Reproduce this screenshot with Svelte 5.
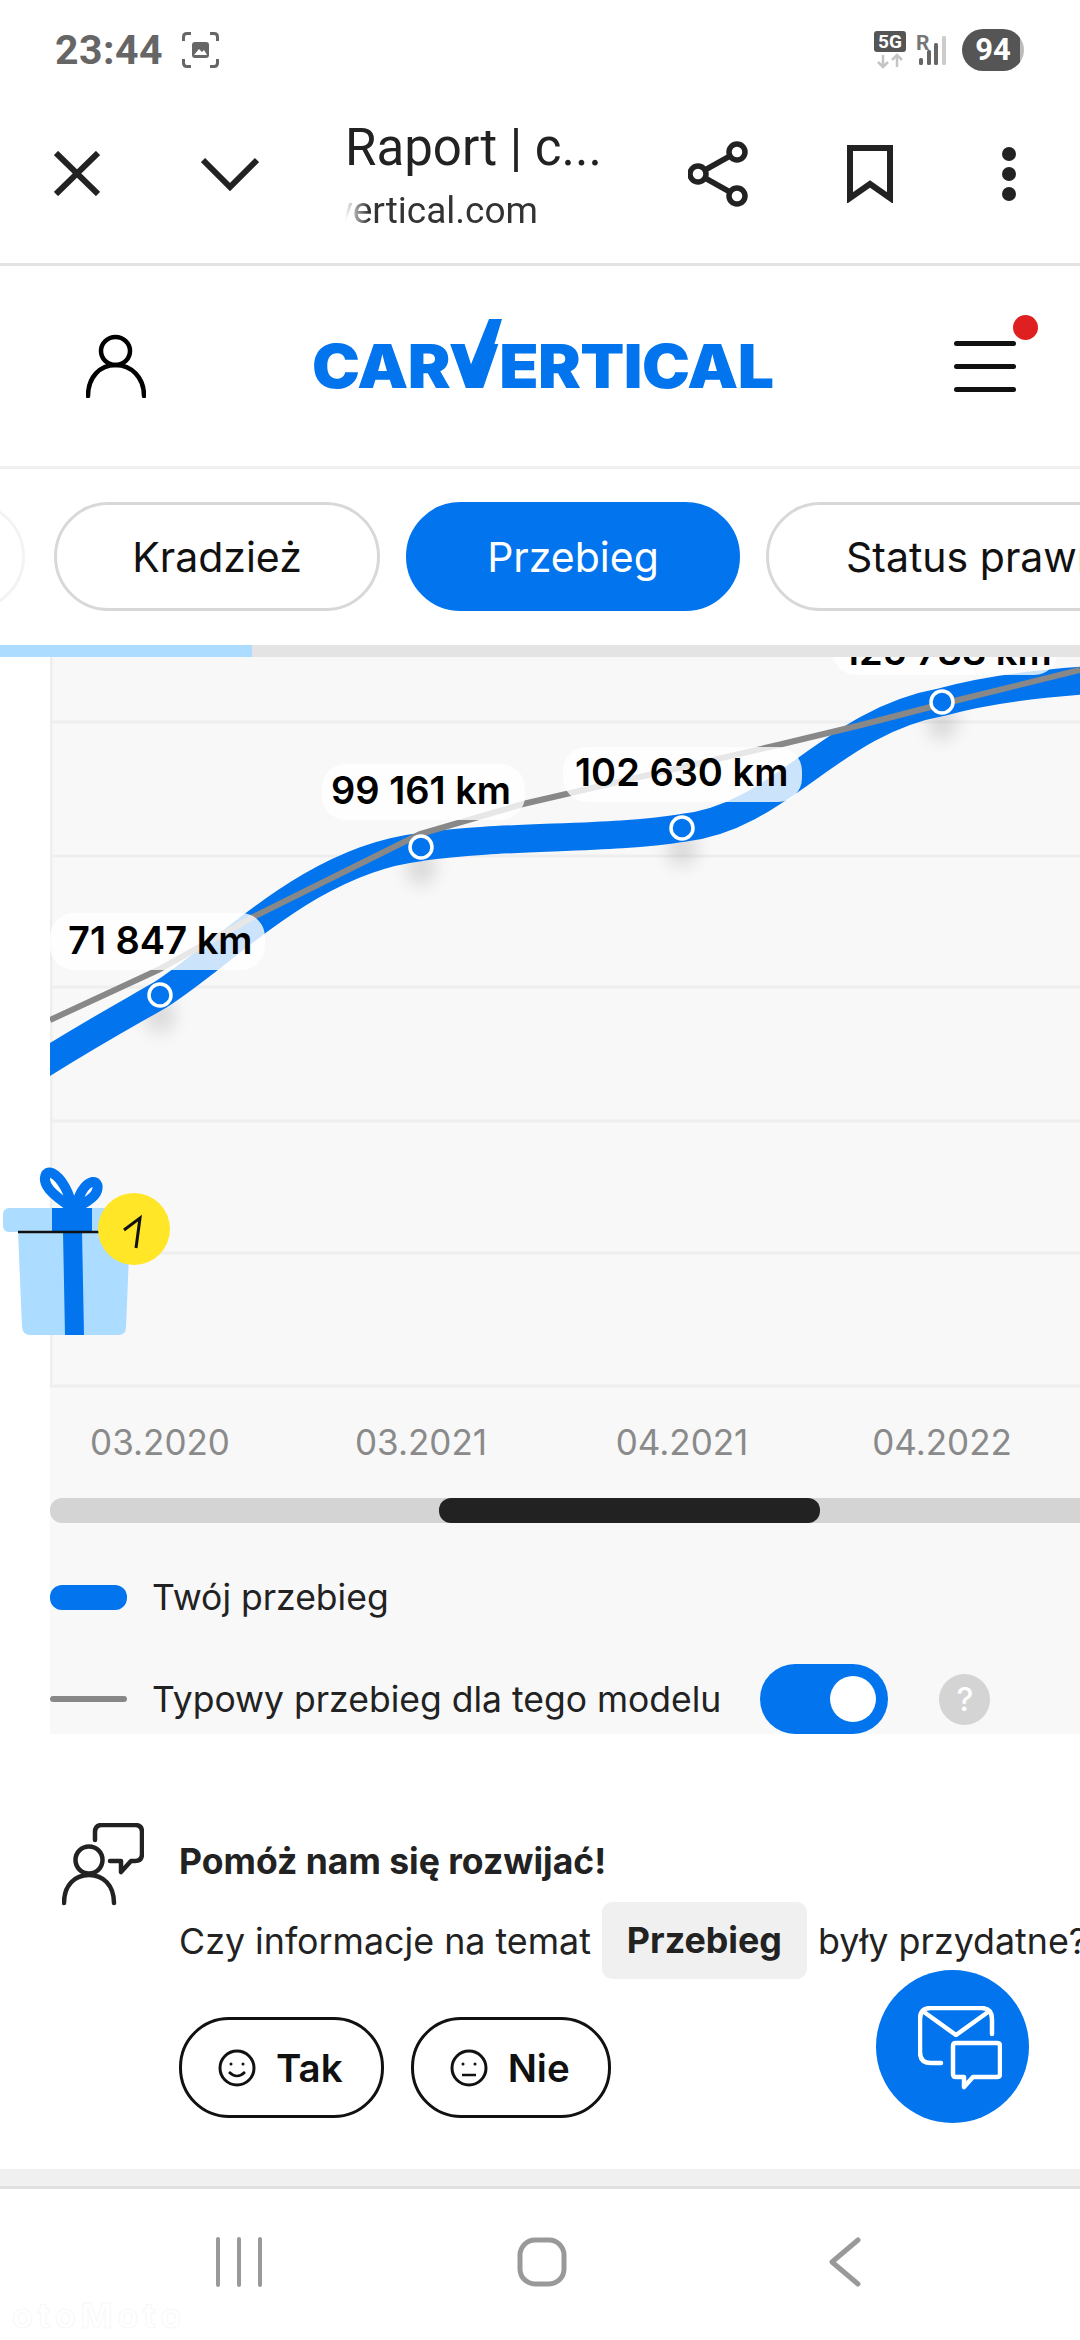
<script>
	const grid = [722, 856, 987, 1121, 1253, 1386];
	const points = [
		{ x: 160, y: 995, date: '03.2020' },
		{ x: 421, y: 847, date: '03.2021' },
		{ x: 682, y: 828, date: '04.2021' },
		{ x: 942, y: 702, date: '04.2022' }
	];
	const labels = [
		{ x: 50, y: 913, w: 215, h: 57, text: '71 847 km', tx: 68, ty: 954 },
		{ x: 322, y: 764, w: 203, h: 56, text: '99 161 km', tx: 331, ty: 804 },
		{ x: 563, y: 747, w: 239, h: 55, text: '102 630 km', tx: 575, ty: 786 },
		{ x: 832, y: 618, w: 226, h: 57, text: '125 788 km', tx: 843, ty: 665 }
	];
	const blue =
		'M30 1072 C90 1034 120 1018 160 995 C230 950 310 860 421 847 C500 835 610 840 682 828 C780 818 830 722 942 702 C985 690 1030 684 1090 680';
	const gray = 'M50 1020 L158 970 L255 916 L420 834 L523 804 L778 745 L861 725 L942 704 L1080 670';
</script>

<div class="app">
	<div class="status">
		<div class="status-left">
			<span class="time">23:44</span>
			<svg width="37" height="36" viewBox="0 0 37 36" fill="none" stroke="#666" stroke-width="3">
				<path d="M1.5 9V5q0-3.5 3.5-3.5h4M28 1.500h4q3.500 0 3.500 3.500v4M35.500 27v4q0 3.500-3.500 3.500h-4M9 34.500H5q-3.500 0-3.500-3.500v-4" />
				<rect x="10" y="10" width="17" height="16" rx="3" fill="#666" stroke="none" />
				<path d="M12 23l5-6 3 3 2-2 3 5z" fill="#fff" stroke="none" />
			</svg>
		</div>
		<div class="status-right">
			<svg width="76" height="42" viewBox="0 0 76 42">
				<rect x="0" y="2" width="32" height="21" rx="3" fill="#555" />
				<text x="16" y="19" class="net">5G</text>
				<path d="M9 26v12M4 33l5 5 5-5M23 38V26M18 31l5-5 5 5" fill="none" stroke="#c4c4c4" stroke-width="2.500" />
				<text x="42" y="21" class="roam">R</text>
				<rect x="45" y="29" width="4" height="7" rx="1.500" fill="#666" />
				<rect x="53" y="21" width="4" height="15" rx="1.500" fill="#666" />
				<rect x="60" y="14" width="4" height="22" rx="1.500" fill="#666" />
				<rect x="68" y="7" width="4" height="29" rx="1.500" fill="#ccc" />
			</svg>
			<div class="battery">94</div>
		</div>
	</div>

	<div class="toolbar">
		<svg class="tool close" width="46" height="45" viewBox="0 0 46 45" fill="none" stroke="#222" stroke-width="6">
			<path d="M2 2l42 41M44 2L2 43" />
		</svg>
		<svg class="tool chevron" width="58" height="34" viewBox="0 0 58 34" fill="none" stroke="#222" stroke-width="6">
			<path d="M2 3l27 27L56 3" />
		</svg>
		<div class="page-title">
			<div class="title">Raport | c...</div>
			<div class="url"><span>carvertical.com</span></div>
		</div>
		<svg class="tool share" width="60" height="66" viewBox="0 0 60 66" fill="none" stroke="#222" stroke-width="5.500">
			<circle cx="49" cy="11" r="8" />
			<circle cx="10" cy="33" r="8" />
			<circle cx="49" cy="55" r="8" />
			<path d="M42 15L17 29M17 37l25 14" />
		</svg>
		<svg class="tool bookmark" width="46" height="58" viewBox="0 0 46 58" fill="none" stroke="#222" stroke-width="6">
			<path d="M3 3h40v50L23 39 3 53z" />
		</svg>
		<svg class="tool dots" width="16" height="56" viewBox="0 0 16 56" fill="#222">
			<circle cx="8" cy="8" r="7" />
			<circle cx="8" cy="28" r="7" />
			<circle cx="8" cy="48" r="7" />
		</svg>
	</div>

	<div class="site-header">
		<svg class="user" width="60" height="64" viewBox="0 0 60 64" fill="none" stroke="#000" stroke-width="4.500" stroke-linecap="round">
			<ellipse cx="29.500" cy="17" rx="14.500" ry="14" />
			<path d="M2 62C2 43 14 31 29.500 31S58 43 58 62" />
		</svg>
		<div class="logo">
			<span>CARVERTICAL</span>
			<svg class="tick" width="40" height="64" viewBox="0 0 40 64"><polygon points="27,0 40,0 21,63 2,63" fill="#0174ee" /></svg>
		</div>
		<div class="menu">
			<i></i><i></i><i></i>
			<b class="notif"></b>
		</div>
	</div>

	<div class="tabs">
		<div class="tab faded"></div>
		<div class="tab">Kradzież</div>
		<div class="tab active">Przebieg</div>
		<div class="tab wide">Status prawny</div>
	</div>
	<div class="progress"><div class="progress-fill"></div></div>

	<div class="chart">
		<svg width="1030" height="841" viewBox="50 657 1030 841">
			<defs>
				<filter id="soft" x="-100%" y="-100%" width="300%" height="300%"><feGaussianBlur stdDeviation="9" /></filter>
			</defs>
			{#each grid as y}
				<line x1="50" x2="1080" y1={y} y2={y} class="gridline" />
			{/each}
			<line x1="51" x2="51" y1="657" y2="1386" class="gridline" />
			{#each points as p}
				<ellipse cx={p.x} cy={p.y + 20} rx="15" ry="18" class="shade" filter="url(#soft)" />
			{/each}
			<path d={blue} class="mileage" />
			<path d={gray} class="typical" />
			{#each labels as l}
				<rect x={l.x} y={l.y} width={l.w} height={l.h} rx="24" class="label-bg" />
				<text x={l.tx} y={l.ty} class="label">{l.text}</text>
			{/each}
			{#each points as p}
				<circle cx={p.x} cy={p.y} r="11" class="dot" />
				<text x={p.x} y="1455" class="date">{p.date}</text>
			{/each}
		</svg>
		<div class="scrollbar"><div class="thumb"></div></div>
		<div class="legend">
			<div class="legend-row first">
				<span class="swatch"></span>
				<span>Twój przebieg</span>
			</div>
			<div class="legend-row">
				<span class="swatch thin"></span>
				<span>Typowy przebieg dla tego modelu</span>
				<span class="toggle"><span class="knob"></span></span>
				<span class="help">?</span>
			</div>
		</div>
	</div>

	<div class="gift">
		<svg width="170" height="176" viewBox="0 0 170 176">
			<path d="M18 67h112l-4 96q0 8-8 8H30q-7 0-8-8z" fill="#acdcff" />
			<rect x="3" y="44" width="118" height="24" rx="6" fill="#acdcff" />
			<rect x="52" y="44" width="40" height="24" fill="#0174ee" />
			<path d="M63 67h19l2 104H65z" fill="#0174ee" />
			<path d="M72 44C70 30 62 14 52 9c-7-3-9 6-5 13 5 9 16 15 25 22zM76 44c2-12 8-24 16-26 6-1 7 5 4 11-4 7-12 10-20 15z" fill="#fff" stroke="#0174ee" stroke-width="10" stroke-linejoin="round" />
			<path d="M18 68h82" stroke="#111" stroke-width="2.500" />
			<circle cx="134" cy="65" r="36" fill="#ffe626" />
			<path d="M124 66l16-12-4 30" fill="none" stroke="#111" stroke-width="3" />
		</svg>
	</div>

	<div class="feedback">
		<svg class="helper" width="82" height="84" viewBox="0 0 82 84" fill="none" stroke="#222" stroke-width="4.500" stroke-linecap="round" stroke-linejoin="round">
			<circle cx="27" cy="37" r="13.500" />
			<path d="M2 80C2 62 13 52 27 52s25 10 25 28" />
			<path d="M33 17V9q0-7 7-7h33q7 0 7 7v22q0 7-7 7h-4l-10 11V38H48" />
		</svg>
		<div class="feedback-body">
			<div class="feedback-title">Pomóż nam się rozwijać!</div>
			<div class="question">
				<span>Czy informacje na temat</span>
				<span class="chip">Przebieg</span>
				<span>były przydatne?</span>
			</div>
			<div class="answers">
				<div class="answer yes">
					<svg width="38" height="38" viewBox="0 0 38 38" fill="none" stroke="#111" stroke-width="3">
						<circle cx="19" cy="19" r="17" />
						<circle cx="13" cy="15" r="1.500" fill="#111" stroke="none" />
						<circle cx="25" cy="15" r="1.500" fill="#111" stroke="none" />
						<path d="M11 23q8 8 16 0" stroke-width="2.500" />
					</svg>
					Tak
				</div>
				<div class="answer no">
					<svg width="38" height="38" viewBox="0 0 38 38" fill="none" stroke="#111" stroke-width="3">
						<circle cx="19" cy="19" r="17" />
						<circle cx="13" cy="15" r="1.500" fill="#111" stroke="none" />
						<circle cx="25" cy="15" r="1.500" fill="#111" stroke="none" />
						<path d="M12 26h14" stroke-width="2.500" />
					</svg>
					Nie
				</div>
			</div>
		</div>
	</div>

	<div class="fab">
		<svg width="84" height="84" viewBox="0 0 84 84" fill="none" stroke="#fff" stroke-width="4.500" stroke-linecap="round" stroke-linejoin="round">
			<path d="M23 57H13Q2 57 2 46V13Q2 2 13 2h50q11 0 11 11v15" />
			<path d="M6 6l32 23L70 6" />
			<path d="M38 37h41q3 0 3 3v28q0 3-3 3H55L46 81V71h-8q-3 0-3-3V40q0-3 3-3z" />
		</svg>
	</div>

	<div class="band"></div>
	<div class="nav">
		<svg width="48" height="50" viewBox="0 0 48 50" stroke="#999" stroke-width="4" stroke-linecap="round">
			<path d="M3 2v46M24 2v46M45 2v46" />
		</svg>
		<svg width="50" height="50" viewBox="0 0 50 50" fill="none" stroke="#999" stroke-width="5">
			<rect x="3" y="3" width="44" height="44" rx="15" />
		</svg>
		<svg width="32" height="50" viewBox="0 0 32 50" fill="none" stroke="#999" stroke-width="5" stroke-linecap="round" stroke-linejoin="round">
			<path d="M29 3L3 25l26 22" />
		</svg>
	</div>
	<div class="watermark">otoMoto</div>
</div>

<style>
	:global(body) {
		margin: 0;
		background: #fff;
	}
	.app {
		position: relative;
		width: 1080px;
		height: 2340px;
		overflow: hidden;
		background: #fff;
		font-family: Inter, Roboto, 'Liberation Sans', sans-serif;
		color: #1a1a1a;
	}
	.status {
		display: flex;
		justify-content: space-between;
		align-items: center;
		height: 80px;
		padding: 19px 56px 0 55px;
		box-sizing: border-box;
		font-family: Roboto, sans-serif;
	}
	.status-left {
		display: flex;
		align-items: center;
		gap: 19px;
	}
	.time {
		font-size: 41px;
		font-weight: 700;
		color: #666;
		letter-spacing: 0.5px;
	}
	.status-right {
		display: flex;
		align-items: center;
		gap: 12px;
	}
	.net {
		font-size: 19px;
		font-weight: 700;
		fill: #fff;
		text-anchor: middle;
	}
	.roam {
		font-size: 21px;
		font-weight: 700;
		fill: #777;
	}
	.battery {
		width: 62px;
		height: 42px;
		border-radius: 21px;
		background: linear-gradient(90deg, #555 94%, #bbb 94%);
		color: #fff;
		font-size: 31px;
		font-weight: 700;
		line-height: 42px;
		text-align: center;
	}
	.toolbar {
		position: relative;
		display: flex;
		align-items: center;
		height: 186px;
		padding: 4px 0 0 54px;
		box-sizing: border-box;
		border-bottom: 3px solid #e3e3e3;
		font-family: Roboto, sans-serif;
	}
	.close {
		margin-right: 101px;
	}
	.chevron {
		margin-right: 86px;
	}
	.page-title {
		width: 280px;
		margin-top: 4px;
		margin-right: 63px;
	}
	.title {
		font-size: 51px;
		line-height: 66px;
		color: #222;
	}
	.url {
		width: 193px;
		margin-top: 4px;
		overflow: hidden;
		font-size: 37px;
		line-height: 52px;
		color: #333;
		direction: rtl;
		white-space: nowrap;
		-webkit-mask-image: linear-gradient(90deg, transparent 0, #000 24px);
		mask-image: linear-gradient(90deg, transparent 0, #000 24px);
	}
	.url span {
		direction: ltr;
		unicode-bidi: bidi-override;
	}
	.share {
		margin-right: 99px;
	}
	.bookmark {
		margin-right: 108px;
	}
	.site-header {
		display: flex;
		align-items: center;
		height: 200px;
		padding: 0 64px 0 86px;
		border-bottom: 3px solid #f0f0f0;
	}
	.logo {
		position: relative;
		margin-left: 166px;
		width: 461px;
		font-size: 60px;
		font-weight: 900;
		line-height: 60px;
		letter-spacing: -0.5px;
		color: #0174ee;
		white-space: nowrap;
	}
	.logo span {
		display: inline-block;
		transform: scaleX(1.07);
		transform-origin: left;
	}
	.tick {
		position: absolute;
		left: 150px;
		top: -17px;
	}
	.menu {
		position: relative;
		display: flex;
		flex-direction: column;
		gap: 18px;
		width: 62px;
		margin-left: auto;
	}
	.menu i {
		display: block;
		height: 5px;
		border-radius: 3px;
		background: #111;
	}
	.notif {
		position: absolute;
		right: -22px;
		top: -26px;
		width: 25px;
		height: 25px;
		border-radius: 50%;
		background: #e02020;
	}
	.tabs {
		display: flex;
		gap: 26px;
		height: 176px;
		padding-top: 33px;
		box-sizing: border-box;
		margin-left: -300px;
		width: 1380px;
		overflow: hidden;
	}
	.tab {
		flex: none;
		display: flex;
		align-items: center;
		justify-content: center;
		width: 326px;
		height: 109px;
		box-sizing: border-box;
		border: 3px solid #d8d8d8;
		border-radius: 55px;
		font-size: 41px;
		color: #111;
	}
	.faded {
		width: 325px;
		margin-right: 3px;
		border-color: #f3f3f3;
	}
	.active {
		width: 334px;
		background: #0174ee;
		border-color: #0174ee;
		color: #fff;
	}
	.wide {
		width: 420px;
		padding-left: 77px;
		justify-content: flex-start;
		white-space: nowrap;
	}
	.progress {
		height: 12px;
		background: #e4e4e4;
	}
	.progress-fill {
		width: 252px;
		height: 100%;
		background: #acdcff;
	}
	.chart {
		margin-left: 50px;
		background: #f8f8f8;
	}
	.chart svg {
		display: block;
	}
	.gridline {
		stroke: #eeeeee;
		stroke-width: 3;
	}
	.shade {
		fill: #000;
		opacity: 0.12;
	}
	.mileage {
		fill: none;
		stroke: #0174ee;
		stroke-width: 28;
	}
	.typical {
		fill: none;
		stroke: #888;
		stroke-width: 6;
	}
	.label-bg {
		fill: #fff;
		opacity: 0.8;
	}
	.label {
		font-size: 38px;
		font-weight: 600;
		fill: #000;
	}
	.dot {
		fill: #0174ee;
		stroke: #fff;
		stroke-width: 3.5;
	}
	.date {
		font-size: 35px;
		fill: #8a8a8a;
		text-anchor: middle;
	}
	.scrollbar {
		position: relative;
		height: 25px;
		border-radius: 12px 0 0 12px;
		background: #d4d4d4;
	}
	.thumb {
		position: absolute;
		left: 389px;
		width: 381px;
		height: 25px;
		border-radius: 12px;
		background: #222;
	}
	.legend {
		display: flex;
		flex-direction: column;
		gap: 40px;
		padding-top: 47px;
		font-size: 35.500px;
		color: #222;
	}
	.legend-row {
		display: flex;
		align-items: center;
		height: 70px;
	}
	.first {
		height: 54px;
	}
	.swatch {
		width: 77px;
		height: 25px;
		margin-right: 25px;
		border-radius: 12px;
		background: #0174ee;
	}
	.thin {
		height: 6px;
		border-radius: 3px;
		background: #888;
	}
	.toggle {
		position: relative;
		width: 128px;
		height: 70px;
		margin-left: 39px;
		border-radius: 35px;
		background: #0174ee;
	}
	.knob {
		position: absolute;
		right: 12px;
		top: 12px;
		width: 46px;
		height: 46px;
		border-radius: 50%;
		background: #fff;
	}
	.help {
		width: 51px;
		height: 51px;
		margin-left: 51px;
		border-radius: 50%;
		background: #d4d4d4;
		color: #fff;
		font-size: 32px;
		font-weight: 500;
		line-height: 51px;
		text-align: center;
	}
	.gift {
		position: absolute;
		left: 0;
		top: 1164px;
	}
	.feedback {
		display: flex;
		height: 435px;
		padding: 89px 0 0 62px;
		box-sizing: border-box;
	}
	.helper {
		flex: none;
	}
	.feedback-body {
		margin: 14px 0 0 35px;
		white-space: nowrap;
	}
	.feedback-title {
		font-size: 35.500px;
		font-weight: 700;
		line-height: 50px;
		color: #222;
	}
	.question {
		display: flex;
		align-items: center;
		gap: 11px;
		margin-top: 15px;
		font-size: 35.800px;
		color: #222;
	}
	.chip {
		padding: 0 25px;
		line-height: 77px;
		border-radius: 10px;
		background: #f0f0f0;
		font-weight: 700;
	}
	.answers {
		display: flex;
		gap: 27px;
		margin-top: 38px;
	}
	.answer {
		display: flex;
		align-items: center;
		gap: 20px;
		height: 101px;
		box-sizing: border-box;
		padding: 0 38px 0 36px;
		border: 3.5px solid #111;
		border-radius: 50px;
		font-size: 38.500px;
		font-weight: 600;
		color: #111;
	}
	.fab {
		position: absolute;
		left: 876px;
		top: 1970px;
		display: flex;
		align-items: center;
		justify-content: center;
		width: 153px;
		height: 153px;
		border-radius: 50%;
		background: #0174ee;
	}
	.fab svg {
		margin: 3px 0 0 15px;
	}
	.band {
		height: 17px;
		background: #f0f0f0;
		border-bottom: 3px solid #e0e0e0;
	}
	.nav {
		display: grid;
		grid-template-columns: repeat(3, 303px);
		justify-content: center;
		justify-items: center;
		padding: 48px 0 0 4px;
	}
	.watermark {
		position: absolute;
		left: 12px;
		bottom: 4px;
		font-size: 34px;
		font-weight: 700;
		letter-spacing: 5px;
		color: #fff;
		-webkit-text-stroke: 1px #f8f8f8;
	}
</style>
